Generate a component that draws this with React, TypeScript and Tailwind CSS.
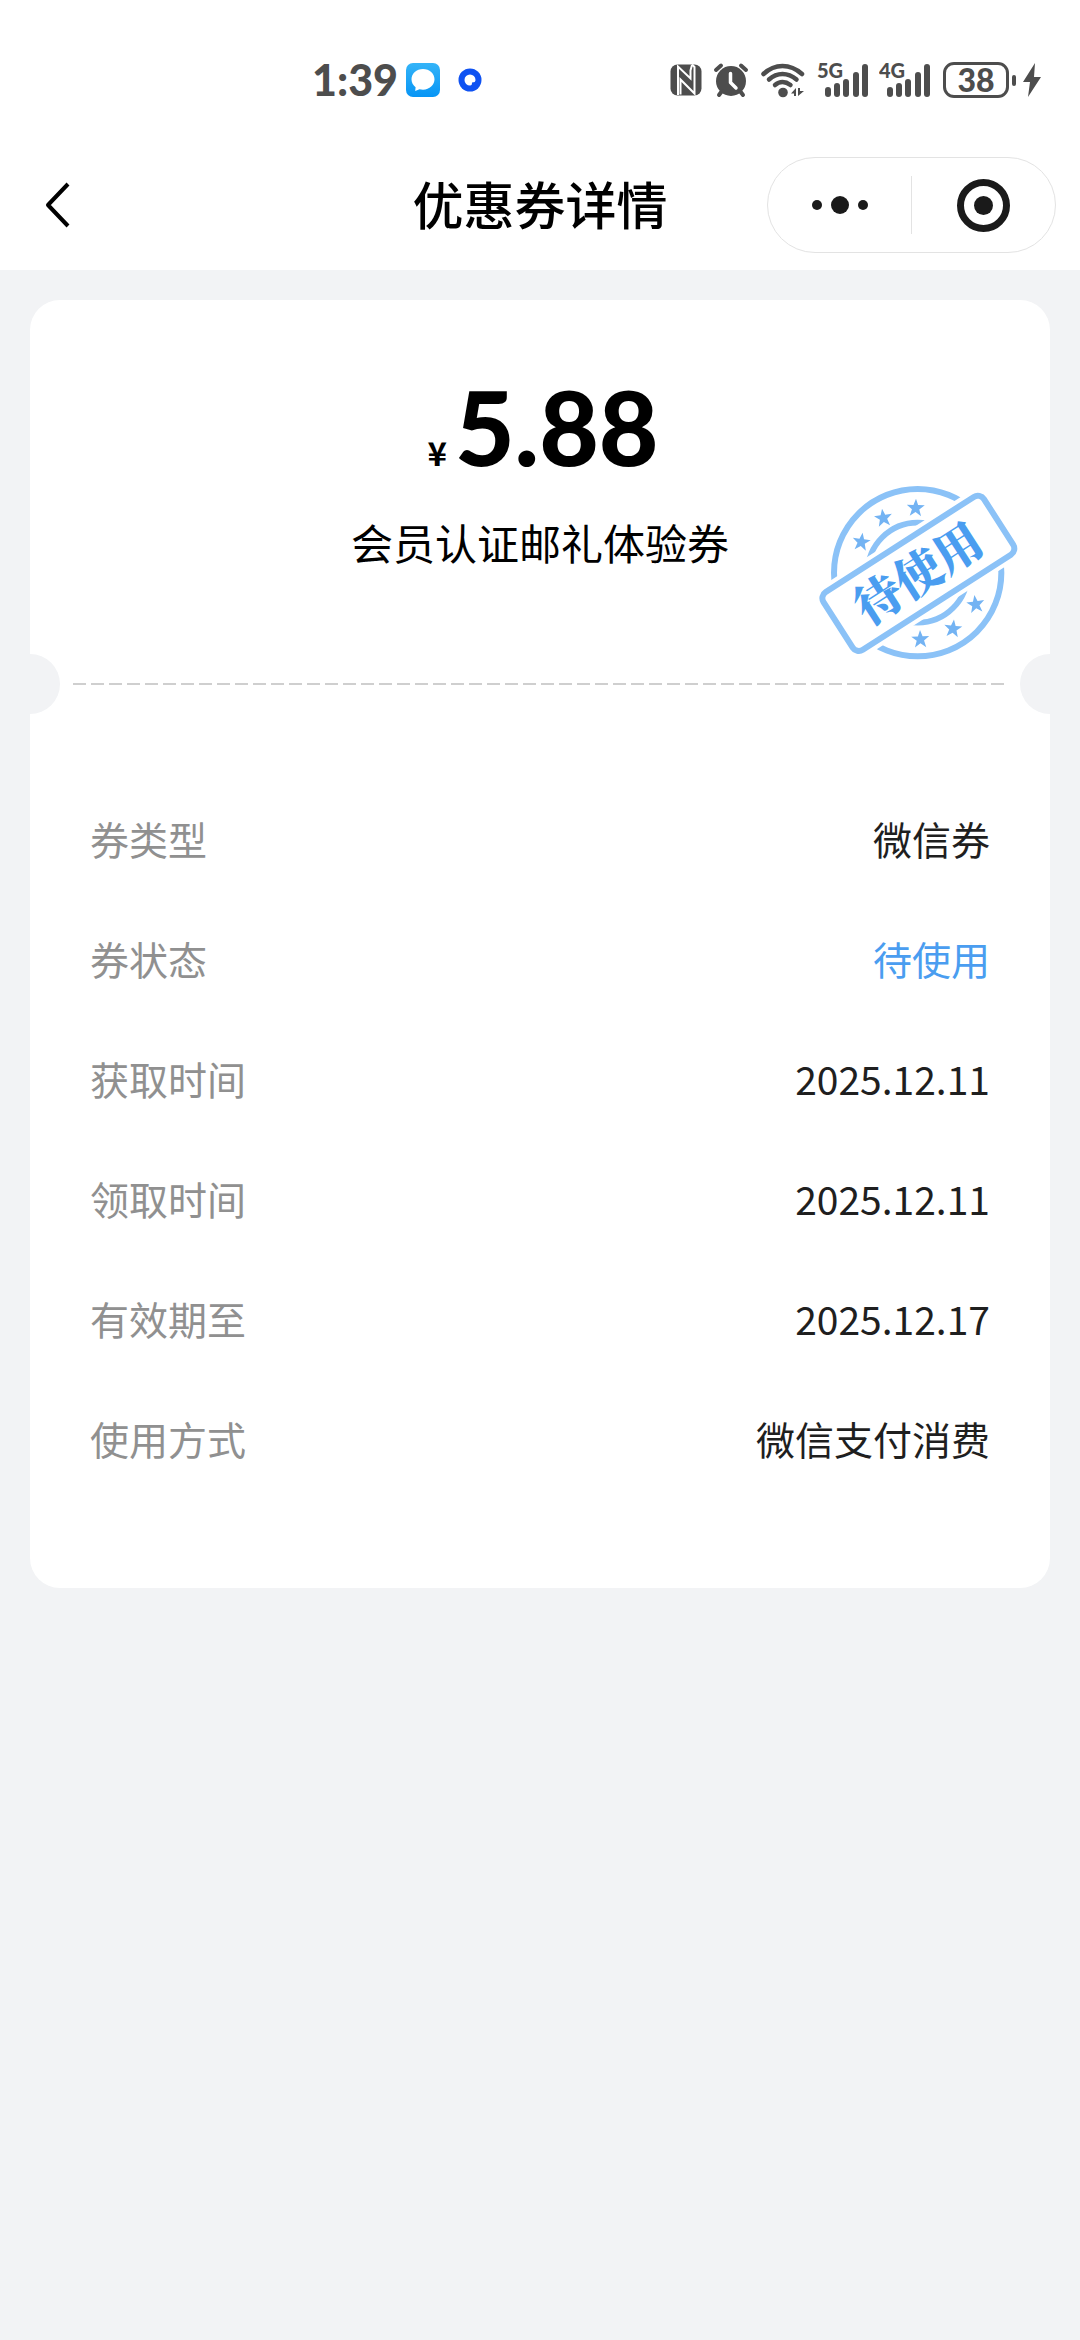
type Row = { label: string; value: string; highlight?: boolean };

const rows: Row[] = [
  { label: "券类型", value: "微信券" },
  { label: "券状态", value: "待使用", highlight: true },
  { label: "获取时间", value: "2025.12.11" },
  { label: "领取时间", value: "2025.12.11" },
  { label: "有效期至", value: "2025.12.17" },
  { label: "使用方式", value: "微信支付消费" },
];

const STAR = "M0 -28 L7 -9 L27 -9 L11 4 L17 24 L0 12 L-17 24 L-11 4 L-27 -9 L-7 -9 Z";

const stars = [
  { x: 214, y: 246, r: 8 },
  { x: 280, y: 174, r: -8 },
  { x: 377, y: 144, r: 2 },
  { x: 557, y: 433, r: -8 },
  { x: 489, y: 506, r: 6 },
  { x: 391, y: 538, r: -2 },
];

function Signal({ label }: { label: string }) {
  return (
    <svg viewBox="0 -6 52 48" className="-my-[6px] h-12 w-[52px]" fill="#4d4d4d" role="img" aria-label={label + " 信号"}>
      <text x="0" y="16" fontSize="20" fontWeight="900" fontFamily="Lato, sans-serif">
        {label}
      </text>
      <rect x="8" y="25" width="6" height="10" rx="3" />
      <rect x="17" y="21" width="6" height="14" rx="3" />
      <rect x="26" y="17" width="6" height="18" rx="3" />
      <rect x="36" y="10" width="6" height="25" rx="3" />
      <rect x="45" y="2" width="6" height="33" rx="3" />
    </svg>
  );
}

function StatusBar() {
  return (
    <div className="flex items-center pt-[62px] pr-[39px] pb-[42px] pl-[312px] font-[Lato,sans-serif] text-[#4d4d4d]">
      <span className="text-[43px] leading-9 font-black">1:39</span>
      <svg viewBox="0 0 34 34" className="ml-2 size-[34px]" aria-hidden="true">
        <defs>
          <linearGradient id="msg" x1="0" y1="0" x2="0" y2="1">
            <stop offset="0" stopColor="#34b4f8" />
            <stop offset="1" stopColor="#0795f5" />
          </linearGradient>
        </defs>
        <rect width="34" height="34" rx="7" fill="url(#msg)" />
        <path
          d="M17 6 C10.500 6 5.500 10.500 5.500 16.300 C5.500 19.500 7 22.300 9.600 24.200 L9.200 28 L13.500 26.300 C14.600 26.600 15.800 26.700 17 26.700 C23.500 26.700 28.500 22 28.500 16.300 C28.500 10.500 23.500 6 17 6 Z"
          fill="#fff"
        />
      </svg>
      <svg viewBox="0 0 24 24" className="ml-[18px] size-6" aria-hidden="true">
        <circle cx="12" cy="12" r="11.500" fill="#0f52f2" />
        <path d="M12 6.500 a5.500 5.500 0 1 0 0 11 c1.800 0 2 -1 2 -3 c2.500 0 3.500 -.8 3.500 -2.500 a5.500 5.500 0 0 0 -5.500 -5.500 Z" fill="#fff" />
      </svg>

      <div className="ml-auto flex items-center">
        <svg viewBox="0 0 32 32" className="size-8" aria-label="NFC" role="img">
          <rect x="0.500" y="0.500" width="31" height="31" rx="7" fill="#4d4d4d" />
          <path d="M8 31 V2.500 L20.500 14.500 V6.500 L22 1" fill="none" stroke="#fff" strokeWidth="2" />
          <path d="M10.500 30.500 V15.500 L24.500 29.500 V3 L22 0.500" fill="none" stroke="#fff" strokeWidth="2" />
        </svg>
        <svg viewBox="0 0 36 36" className="ml-[11px] size-9" aria-label="闹钟" role="img">
          <circle cx="18" cy="19" r="15" fill="#4d4d4d" />
          <path d="M3 8 L8 3.500 M33 8 L28 3.500 M9 29 L6 33 M27 29 L30 33" stroke="#4d4d4d" strokeWidth="4" strokeLinecap="round" />
          <path d="M17.500 11.500 V20.500 L23 26" fill="none" stroke="#fff" strokeWidth="3.500" strokeLinecap="round" strokeLinejoin="round" />
        </svg>
        <svg viewBox="0 0 44 36" className="ml-3 h-9 w-11" aria-label="无线网络" role="img">
          <g fill="none" stroke="#4d4d4d" strokeWidth="4.500" strokeLinecap="round">
            <path d="M2.500 12 Q11 4 21.500 4 T41 12" />
            <path d="M8 17.500 Q14 12 21.500 12 T35.500 17.500" />
            <path d="M14 23 Q17.500 20 21.500 20 T29.500 23" />
          </g>
          <circle cx="22" cy="30.500" r="4.800" fill="#4d4d4d" />
          <path d="M35 26 V34 H33 V31.500 H30 Z M37 26 H39 V29 H43 L37 34 Z" fill="#4d4d4d" />
        </svg>
        <div className="ml-3 flex gap-[10px]">
          <Signal label="5G" />
          <Signal label="4G" />
        </div>
        <div className="ml-3 flex h-9 w-[66px] items-center justify-center rounded-[11px] border-3 border-[#4d4d4d] text-[32px] leading-none font-black">
          38
        </div>
        <span className="ml-[3px] h-[11px] w-1 rounded-sm bg-[#4d4d4d]" />
        <svg viewBox="0 0 18 34" className="ml-[7px] h-[34px] w-[18px]" aria-label="充电中" role="img">
          <path d="M12 0 L0 19 H7 L5 34 L18 14 H11 Z" fill="#4d4d4d" />
        </svg>
      </div>
    </div>
  );
}

function NavBar() {
  return (
    <div className="grid h-[130px] grid-cols-[1fr_auto_1fr] items-center px-6">
      <button type="button" aria-label="返回" className="ml-2 flex size-12 items-center justify-center">
        <svg viewBox="0 0 48 48" className="size-12" fill="none" stroke="#000" strokeWidth="4">
          <path d="M36 3 L16 24 L36 45" strokeLinejoin="round" />
        </svg>
      </button>
      <h1 className="pb-1 text-[51px] leading-[60px] font-medium text-black">优惠券详情</h1>
      <div className="flex h-24 w-[289px] items-center justify-self-end rounded-full border border-[#e3e3e3]">
        <button type="button" aria-label="更多" className="flex h-full flex-1 items-center justify-center gap-[9px]">
          <span className="size-[10px] rounded-full bg-[#1a1a1a]" />
          <span className="size-[18px] rounded-full bg-[#1a1a1a]" />
          <span className="size-[10px] rounded-full bg-[#1a1a1a]" />
        </button>
        <span className="h-[58px] w-px bg-[#e3e3e3]" />
        <button type="button" aria-label="关闭" className="flex h-full flex-1 items-center justify-center">
          <span className="flex size-[53px] items-center justify-center rounded-full border-7 border-[#1a1a1a]">
            <span className="size-[19px] rounded-full bg-[#1a1a1a]" />
          </span>
        </button>
      </div>
    </div>
  );
}

function Stamp() {
  return (
    <svg viewBox="0 0 780 660" className="absolute top-40 right-0 h-[220px] w-[260px]" role="img" aria-label="待使用">
      <circle cx="383" cy="338" r="251" fill="none" stroke="#8bc2f7" strokeWidth="18" />
      <circle cx="383" cy="338" r="150" fill="none" stroke="#8bc2f7" strokeWidth="17" />
      {stars.map((s) => (
        <path key={s.x} d={STAR} fill="#73b3f3" transform={`translate(${s.x} ${s.y}) rotate(${s.r})`} />
      ))}
      <g transform="translate(385 340) rotate(-32.700)">
        <rect x="-307" y="-124" width="614" height="248" rx="36" fill="#fff" />
        <rect x="-286" y="-103" width="572" height="206" rx="22" fill="#fff" stroke="#8bc2f7" strokeWidth="18" />
        <text
          x="0"
          y="53"
          textAnchor="middle"
          fontSize="142"
          fontWeight="900"
          fill="#4a9df0"
          fontFamily="'Noto Serif CJK SC', 'Noto Sans CJK SC', serif"
        >
          待使用
        </text>
      </g>
    </svg>
  );
}

export default function App() {
  return (
    <div className="min-h-screen bg-[#f2f3f5] font-['Noto_Sans_CJK_SC',sans-serif]">
      <header className="bg-white">
        <StatusBar />
        <NavBar />
      </header>
      <main className="p-[30px]">
        <section className="relative overflow-hidden rounded-[30px] bg-white">
          <div className="pt-[76px] pb-[82px] text-center text-black">
            <p className="flex items-baseline justify-center gap-2 pl-[6px] font-bold">
              <span className="text-[33px] leading-none">¥</span>
              <span className="font-[Lato,sans-serif] text-[103px] leading-[100px] font-black">5.88</span>
            </p>
            <h2 className="mt-9 text-[42px] leading-[60px] font-normal">会员认证邮礼体验券</h2>
          </div>
          <Stamp />
          <div className="-mx-[30px] flex items-center gap-[13px]">
            <span className="size-[60px] rounded-full bg-[#f2f3f5]" />
            <span className="h-[2px] flex-1 bg-[repeating-linear-gradient(90deg,#cfcfcf_0_13px,transparent_13px_18px)]" />
            <span className="size-[60px] rounded-full bg-[#f2f3f5]" />
          </div>
          <dl className="flex flex-col gap-[60px] px-[60px] pt-[94px] pb-[120px] text-[39px] leading-[60px]">
            {rows.map((row) => (
              <div key={row.label} className="flex justify-between">
                <dt className="text-[#909090]">{row.label}</dt>
                <dd className={row.highlight ? "text-[#4a9df0]" : "text-[#1f1f1f]"}>{row.value}</dd>
              </div>
            ))}
          </dl>
        </section>
      </main>
    </div>
  );
}
